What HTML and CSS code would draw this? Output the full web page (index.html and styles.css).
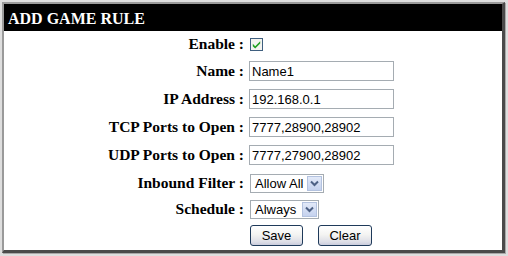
FILE: index.html
```html
<!DOCTYPE html>
<html>
<head>
<meta charset="utf-8">
<title>Add Game Rule</title>
<link rel="stylesheet" href="styles.css">
</head>
<body>
<div class="panel">
  <div class="title">ADD GAME RULE</div>
  <form class="form">
    <div class="label">Enable :</div>
    <div class="field">
      <svg class="check" width="13" height="13" viewBox="0 0 13 13">
        <rect x="0.5" y="0.5" width="12" height="12" fill="#f4f4f0" stroke="#3f5f7f"/>
        <path d="M2.8 5.8 L5.2 8.2 L10.2 3.2 L10.2 5.6 L5.2 10.6 L2.8 8.2 Z" fill="#21a121"/>
      </svg>
    </div>
    <div class="label">Name :</div>
    <div class="field"><input class="text" type="text" value="Name1"></div>
    <div class="label">IP Address :</div>
    <div class="field"><input class="text" type="text" value="192.168.0.1"></div>
    <div class="label">TCP Ports to Open :</div>
    <div class="field"><input class="text" type="text" value="7777,28900,28902"></div>
    <div class="label">UDP Ports to Open :</div>
    <div class="field"><input class="text" type="text" value="7777,27900,28902"></div>
    <div class="label">Inbound Filter :</div>
    <div class="field">
      <div class="select sel-filter"><span class="sel-text">Allow All</span><span class="arrow"><svg width="9" height="7" viewBox="0 0 9 7"><path d="M1 1.5 L4.5 5 L8 1.5" fill="none" stroke="#4d6185" stroke-width="2"/></svg></span></div>
    </div>
    <div class="label">Schedule :</div>
    <div class="field">
      <div class="select sel-sched"><span class="sel-text">Always</span><span class="arrow"><svg width="9" height="7" viewBox="0 0 9 7"><path d="M1 1.5 L4.5 5 L8 1.5" fill="none" stroke="#4d6185" stroke-width="2"/></svg></span></div>
    </div>
    <div class="label"></div>
    <div class="field buttons">
      <button type="button" class="btn btn-save">Save</button>
      <button type="button" class="btn btn-clear">Clear</button>
    </div>
  </form>
</div>
</body>
</html>
```

FILE: styles.css
```css
html, body {
  margin: 0;
  padding: 0;
}
body {
  width: 508px;
  height: 256px;
  background: #dedede;
  overflow: hidden;
}
.panel {
  margin: 2px 0 0 2px;
  width: 498px;
  height: 246px;
  border-left: 2px solid #9a9a9a;
  border-top: 2px solid #9a9a9a;
  border-right: 3px solid #4a4a4a;
  border-bottom: 3px solid #4a4a4a;
  background: #ffffff;
  box-shadow: 1px 1px 0 #a8a8a8;
}
.title {
  height: 27px;
  background: #000000;
  color: #ffffff;
  font-family: "Liberation Serif", "Times New Roman", serif;
  font-weight: bold;
  font-size: 16px;
  line-height: 27px;
  padding: 1px 0 0 4px;
  box-sizing: border-box;
}
.form {
  margin: 0;
  display: grid;
  grid-template-columns: 241px 1fr;
  grid-template-rows: 26px 28px 28px 28px 28px 28px 24px 28px;
  column-gap: 4px;
}
.label {
  font-family: "Liberation Serif", "Times New Roman", serif;
  font-weight: bold;
  font-size: 15.5px;
  color: #000000;
  text-align: right;
  padding-right: 1px;
  display: flex;
  align-items: center;
  justify-content: flex-end;
  white-space: nowrap;
}
.field {
  display: flex;
  align-items: center;
}
.check {
  display: block;
  margin-left: 1px;
}
.text {
  box-sizing: border-box;
  width: 145px;
  height: 20px;
  margin: 0;
  padding: 0 2px;
  border: 1px solid #a5acb2;
  font-family: "Liberation Sans", Arial, sans-serif;
  font-size: 13px;
  color: #000000;
  background: #ffffff;
  outline: none;
}
.select {
  box-sizing: border-box;
  height: 19px;
  margin-left: 1px;
  border: 1px solid #a5acb2;
  background: #ffffff;
  display: flex;
  align-items: stretch;
  padding: 1px;
}
.sel-filter { width: 74px; }
.sel-sched { width: 69px; }
.sel-text {
  flex: 1;
  font-family: "Liberation Sans", Arial, sans-serif;
  font-size: 13px;
  line-height: 15px;
  padding-left: 3px;
  color: #000000;
}
.arrow {
  width: 15px;
  box-sizing: border-box;
  border: 1px solid #b3c2df;
  background: linear-gradient(#e2e9f8, #c5d2ee);
  display: flex;
  align-items: center;
  justify-content: center;
}
.arrow svg {
  display: block;
}
.buttons {
  gap: 15px;
  padding-left: 1px;
}
.btn {
  box-sizing: border-box;
  height: 21px;
  margin: 0;
  padding: 0;
  border: 1px solid #1f3a5a;
  border-radius: 3px;
  background: linear-gradient(#ffffff 0%, #f4f4f2 45%, #dcdde6 85%, #c9cbdc 100%);
  font-family: "Liberation Sans", Arial, sans-serif;
  font-size: 13px;
  color: #000000;
}
.btn-save { width: 53px; }
.btn-clear { width: 54px; }
```
